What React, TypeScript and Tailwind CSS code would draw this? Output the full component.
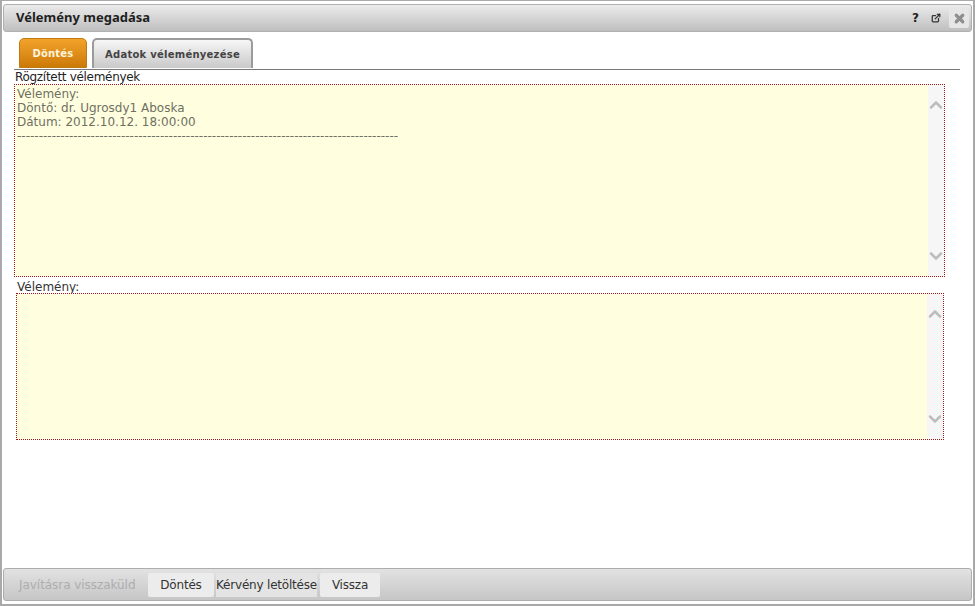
import React from "react";
import { ChevronUp, ChevronDown, ExternalLink, X } from "lucide-react";

const bodyFont = "font-['DejaVu_Sans',Verdana,sans-serif]";

const OpinionBox = ({ className, children }: { className: string; children?: React.ReactNode }) => (
  <div className={`flex border border-dotted border-[#a01414] bg-white ${className}`}>
    <div className="flex-1 overflow-hidden whitespace-pre bg-[#ffffe0] px-[2px] pt-[2px] text-[12px] leading-[14px] text-[#6f6f62]">
      {children}
    </div>
    <div className="flex w-[16px] flex-col items-center justify-between bg-[#f6f6f6] py-[10px] text-[#bdbdbd]">
      <ChevronUp className="h-[20px] w-[20px]" strokeWidth={3} />
      <ChevronDown className="h-[20px] w-[20px]" strokeWidth={3} />
    </div>
  </div>
);

export default function App() {
  return (
    <div className={`flex h-[606px] w-[975px] flex-col border-x-2 border-t border-b-2 border-[#a9a9a9] bg-white px-[1px] pt-[3px] pb-[3px] ${bodyFont}`}>
      <div className="flex h-[28px] shrink-0 items-center justify-between rounded-[3px] border border-[#b0b0b0] bg-gradient-to-b from-[#ebebeb] to-[#bfbfbf] pl-[12px] pr-[2px]">
        <span className="font-['Noto_Sans',sans-serif] text-[13px] font-bold text-[#1f1f1f]">Vélemény megadása</span>
        <div className="flex items-center">
          <span className="text-[12px] font-bold text-[#222]">?</span>
          <ExternalLink className="ml-[12px] h-[10px] w-[10px] text-[#333]" strokeWidth={3} />
          <div className="ml-[8px] flex h-[19px] w-[20px] items-center justify-center rounded-[2px] bg-[#e6e6e6] text-[#8f8f8f]">
            <X className="h-[13px] w-[13px]" strokeWidth={6} />
          </div>
        </div>
      </div>

      <div className="mt-[6px] flex h-[31px] shrink-0 items-start gap-[5px] pl-[16px]">
        <div className="flex h-[30px] w-[68px] items-center justify-center rounded-t-[5px] border border-[#c07a10] bg-gradient-to-b from-[#f2a32a] to-[#cc7a06] text-[10px] font-bold tracking-[0.2px] text-[#fff4dc]">
          Döntés
        </div>
        <div className="flex h-[30px] w-[161px] items-center justify-center rounded-t-[5px] border-x-2 border-t-2 border-[#9b9b9b] bg-gradient-to-b from-[#f7f7f7] to-[#c9c9c9] text-[10px] font-bold tracking-[0.25px] text-[#444]">
          Adatok véleményezése
        </div>
      </div>

      <div className="ml-[11px] h-[1px] w-[946px] shrink-0 bg-[#777]" />

      <div className="ml-[11px] flex flex-1 flex-col">
        <div className="h-[14px] pl-[1px] text-[12px] leading-[14px] tracking-[-0.3px] text-[#222]">Rögzített vélemények</div>
        <OpinionBox className="h-[193px] w-[931px]">
          {"Vélemény:\nDöntő: dr. Ugrosdy1 Aboska\nDátum: 2012.10.12. 18:00:00\n" + "-".repeat(88)}
        </OpinionBox>
        <div className="mt-[3px] h-[13px] pl-[3px] text-[12px] leading-[14px] text-[#333]">Vélemény:</div>
        <OpinionBox className="ml-[2px] h-[147px] w-[928px]" />
      </div>

      <div className="flex h-[33px] shrink-0 items-center rounded-[3px] border border-[#adadad] bg-gradient-to-b from-[#e2e2e2] to-[#c6c6c6] pl-[15px] text-[12px] tracking-[-0.2px]">
        <span className="w-[129px] tracking-[-0.05px] text-[#adadad]">Javításra visszaküld</span>
        <span className="flex h-[24px] w-[66px] items-center justify-center rounded-[2px] bg-[#ececec] text-[#333]">Döntés</span>
        <span className="ml-[2px] flex h-[24px] w-[101px] items-center justify-center bg-[#e4e4e4] text-[#333]">Kérvény letöltése</span>
        <span className="ml-[3px] flex h-[24px] w-[60px] items-center justify-center rounded-[2px] bg-[#ececec] text-[#333]">Vissza</span>
      </div>
    </div>
  );
}
